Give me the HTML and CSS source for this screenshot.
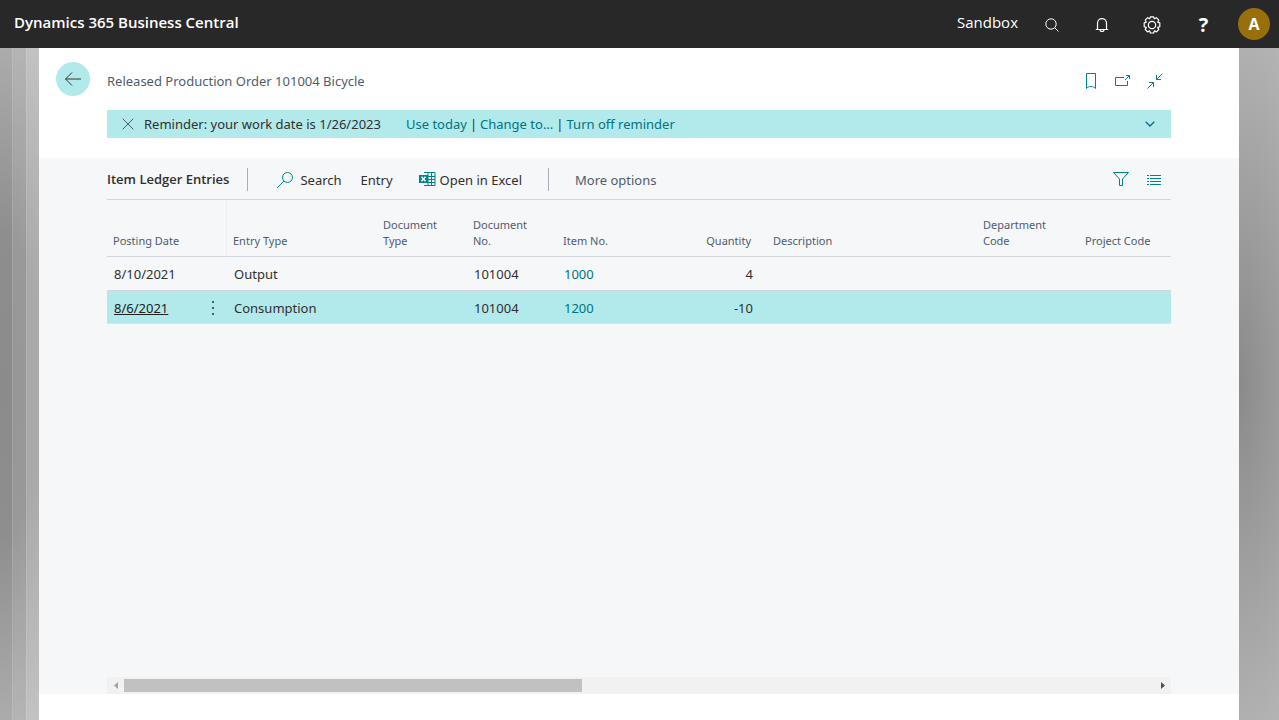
FILE: index.html
```html
<!DOCTYPE html>
<html lang="en">
<head>
<meta charset="utf-8">
<title>Item Ledger Entries - Dynamics 365 Business Central</title>
<link rel="stylesheet" href="styles.css">
</head>
<body>
<header class="topbar">
  <a class="brand" href="#">Dynamics 365 Business Central</a>
  <span class="environment">Sandbox</span>
  <nav class="top-actions">
    <button class="top-button" aria-label="Search"><svg width="16" height="16" viewBox="0 0 16 16"><circle cx="7" cy="7" r="5.2"/><path d="M11 11l3.5 3.5"/></svg></button>
    <button class="top-button" aria-label="Notifications"><svg width="16" height="16" viewBox="0 0 16 16"><path d="M1.800 12.500h12.400M3.500 12.500V6.200a4.500 4.500 0 0 1 9 0v6.300M6 12.500a2 2 0 0 0 4 0" stroke-width="1.200"/></svg></button>
    <button class="top-button" aria-label="Settings"><svg width="20" height="20" viewBox="0 0 20 20"><path d="M8.300 1.800h3.400l.6 2 2.100-1.100 2.400 2.400-1.100 2.100 2.100.7v3.800l-2.100.7 1.100 2.100-2.400 2.400-2.100-1.100-.6 2.200H8.300l-.6-2.200-2.100 1.100-2.400-2.400 1.100-2.100-2.100-.7V7.900l2.100-.7-1.100-2.100 2.400-2.400 2.100 1.100z" stroke-width="1.200" stroke-linejoin="round"/><circle cx="10" cy="10" r="3.700" stroke-width="1.200"/></svg></button>
    <button class="top-button help" aria-label="Help">?</button>
    <button class="avatar" aria-label="Account">A</button>
  </nav>
</header>
<div class="stage">
  <div class="layers"><i></i><i></i><i></i></div>
  <main class="page">
    <div class="page-head">
      <button class="back" aria-label="Back"><svg width="18" height="18" viewBox="0 0 18 18"><path d="M17 9H1.500M8 2.500L1.500 9 8 15.500"/></svg></button>
      <h1 class="caption">Released Production Order 101004 Bicycle</h1>
      <div class="head-actions">
        <button class="icon-button" aria-label="Bookmark"><svg width="16" height="18" viewBox="0 0 16 18"><path d="M3.500 1.500h9v15c-1.500-2.600-7.500-2.600-9 0z"/></svg></button>
        <button class="icon-button" aria-label="Open in new window"><svg width="16" height="18" viewBox="0 0 16 18"><path d="M9 5.500H.500v8h12V9M10 8l4.500-4.500M11 3.500h3.500V7"/></svg></button>
        <button class="icon-button" aria-label="Collapse"><svg width="16" height="18" viewBox="0 0 16 18"><path d="M.5 16.500l6-6M2 10.500h4.500V15M15.500 1.500l-6 6M9.500 3v4.500H14"/></svg></button>
      </div>
    </div>
    <div class="notice">
      <button class="notice-close" aria-label="Dismiss"><svg width="12" height="12" viewBox="0 0 12 12"><path d="M.700.700l10.600 10.600M11.300.700L.700 11.300"/></svg></button>
      <span class="notice-text">Reminder: your work date is 1/26/2023</span>
      <a href="#">Use today</a><span class="bar">|</span><a href="#">Change to...</a><span class="bar">|</span><a href="#">Turn off reminder</a>
      <button class="notice-more" aria-label="Show more"><svg width="10" height="6" viewBox="0 0 10 6"><path d="M.700.700L5 5 9.300.700" stroke-width="1.300"/></svg></button>
    </div>
    <section class="list">
      <div class="toolbar">
        <h2 class="list-title">Item Ledger Entries</h2>
        <button class="tool search"><svg width="18" height="18" viewBox="0 0 18 18"><circle cx="11.500" cy="6.500" r="5"/><path d="M8 10L1 17"/></svg>Search</button>
        <button class="tool">Entry</button>
        <button class="tool excel"><svg width="17" height="16" viewBox="0 0 17 16"><path class="excel-grid" d="M5 .500h11v13H5M9 .500v13M5 4.500h11M5 7.500h11M5 10.500h11M12.500 .500v13"/><path class="excel-tile" d="M0 3h9v8H0z"/><path class="excel-x" d="M2.500 4.700l4 4.600M6.500 4.700l-4 4.600"/></svg>Open in Excel</button>
        <button class="tool more">More options</button>
        <div class="view-actions">
          <button class="icon-button" aria-label="Filter"><svg width="18" height="18" viewBox="0 0 18 18"><path d="M1.500 1.500h15L10.500 8v6.500h-3V8z"/></svg></button>
          <button class="icon-button" aria-label="View layout"><svg width="16" height="18" viewBox="0 0 16 18"><path d="M1 4.500h2M4 4.500h11M1 7.500h2M4 7.500h11M1 10.500h2M4 10.500h11M1 13.500h2M4 13.500h11"/></svg></button>
        </div>
      </div>
      <table class="entries">
        <colgroup><col class="w-date"><col class="w-menu"><col class="w-type"><col class="w-doc"><col class="w-doc"><col class="w-item"><col class="w-qty"><col class="w-desc"><col class="w-dept"><col></colgroup>
        <thead><tr><th>Posting Date</th><th class="split"></th><th>Entry Type</th><th>Document<br>Type</th><th>Document<br>No.</th><th>Item No.</th><th class="num">Quantity</th><th>Description</th><th>Department<br>Code</th><th>Project Code</th></tr></thead>
        <tbody>
          <tr><td>8/10/2021</td><td></td><td>Output</td><td></td><td>101004</td><td><a href="#">1000</a></td><td class="num">4</td><td></td><td></td><td></td></tr>
          <tr class="selected"><td><a class="date-link" href="#">8/6/2021</a></td><td class="menu-cell"><button class="row-menu" aria-label="Row actions"><svg width="4" height="16" viewBox="0 0 4 16"><path d="M1 1h2v2H1zM1 7h2v2H1zM1 13h2v2H1z"/></svg></button></td><td>Consumption</td><td></td><td>101004</td><td><a href="#">1200</a></td><td class="num">-10</td><td></td><td></td><td></td></tr>
        </tbody>
      </table>
      <div class="scrollbar">
        <button class="scroll-arrow left" aria-label="Scroll left"><svg width="4" height="7" viewBox="0 0 4 7"><path d="M4 0v7L0 3.500z"/></svg></button>
        <div class="track"><div class="thumb"></div></div>
        <button class="scroll-arrow" aria-label="Scroll right"><svg width="4" height="7" viewBox="0 0 4 7"><path d="M0 0v7l4-3.500z"/></svg></button>
      </div>
    </section>
  </main>
  <div class="backdrop"></div>
</div>
</body>
</html>
```

FILE: styles.css
```css
* { box-sizing: border-box; }
body {
  margin: 0;
  min-height: 100vh;
  display: flex;
  flex-direction: column;
  font: 13px/20px "Noto Sans", "Open Sans", sans-serif;
  color: #303030;
}
h1, h2 { margin: 0; font-size: inherit; }
a { color: #00747f; text-decoration: none; }
button {
  margin: 0; padding: 0; border: 0; background: none;
  font: inherit; color: inherit;
  display: flex; align-items: center; justify-content: center;
}
svg { display: block; fill: none; stroke: currentColor; }

.topbar {
  display: flex; align-items: center;
  height: 48px; padding: 0 9px 0 14px;
  background: #282828; color: #fff;
  font-family: "Open Sans", "Noto Sans", sans-serif;
}
.brand { color: #fff; font-size: 15px; font-weight: 600; padding-bottom: 4px; }
.environment { margin-left: auto; font-size: 15px; padding-bottom: 4px; }
.top-actions { display: flex; align-items: center; margin-left: 8px; }
.top-button { width: 50px; height: 48px; padding: 2px 0 0 1px; }
.help { font-size: 20px; font-weight: 700; width: 54px; }
.avatar { width: 32px; height: 32px; margin-left: 8px; border-radius: 50%; background: #986f0b; font-size: 16px; font-weight: 700; }

.stage { flex: 1; display: flex; }
.layers, .backdrop { flex: none; display: flex; }
.layers { width: 39px; background: radial-gradient(300% 56% at 0% 50%, #8b8b8b, #8e8e8e 40%, #b2b2b2); }
.layers i { flex: 1; }
.layers i:nth-child(2) { background: rgba(255, 255, 255, .1); border-left: 1px solid rgba(255, 255, 255, .1); }
.layers i:nth-child(3) { background: rgba(255, 255, 255, .25); border-left: 1px solid rgba(255, 255, 255, .1); }
.backdrop { width: 40px; background: radial-gradient(260% 60% at 0% 50%, #8a8a8a, #b8b8b8); }
.page { flex: 1; min-width: 0; display: flex; flex-direction: column; padding-bottom: 26px; background: #fff; }

.page-head { display: flex; align-items: center; height: 62px; padding: 0 76px 0 17px; }
.back { width: 34px; height: 34px; border-radius: 50%; background: #b2e9eb; color: #333; }
.caption { margin-left: 17px; padding-top: 4px; font-weight: 400; color: #505c6d; }
.head-actions { display: flex; gap: 16px; margin-left: auto; padding-top: 4px; }
.icon-button { color: #00838a; }

.notice { display: flex; align-items: center; height: 28px; margin: 0 68px 20px; padding: 0 16px 0 15px; background: #b2e9eb; }
.notice-close { color: #505c6d; }
.notice-text { margin: 0 25px 0 10px; }
.bar { margin: 0 3px; }
.notice-more { margin-left: auto; color: #00747f; }

.list { flex: 1; display: flex; flex-direction: column; padding: 0 68px; background: #f5f7f9; }
.toolbar { display: flex; align-items: center; height: 42px; padding: 2px 9px 0 0; border-bottom: 1px solid #d2d6da; }
.list-title { padding-right: 18px; border-right: 1px solid #a6adb8; font-family: "Open Sans", "Noto Sans", sans-serif; font-weight: 600; line-height: 23px; }
.tool { height: 23px; }
.search { margin: 0 19px 0 28px; gap: 6px; }
.excel { margin: 0 26px; gap: 4px; }
.tool svg { color: #00838a; }
.excel-grid { stroke: #00838a; }
.excel-tile { fill: #00838a; stroke: none; }
.excel-x { stroke: #fff; stroke-width: 1.4; }
.more { padding-left: 26px; border-left: 1px solid #a6adb8; color: #505c6d; }
.view-actions { display: flex; gap: 16px; margin-left: auto; }

.entries { width: 100%; table-layout: fixed; border-collapse: separate; border-spacing: 0; }
.w-date { width: 93px; }
.w-menu { width: 27px; }
.w-type { width: 150px; }
.w-doc, .w-item { width: 90px; }
.w-qty { width: 120px; }
.w-desc { width: 210px; }
.w-dept { width: 102px; }
th { height: 57px; padding: 0 6px 7px; vertical-align: bottom; text-align: left; font-size: 11px; line-height: 16px; font-weight: 400; color: #505c6d; border-bottom: 1px solid #d2d6da; }
td { height: 34px; padding: 0 7px; border-bottom: 1px solid #d2d6da; }
.split { border-right: 1px solid #eceef1; }
.num { text-align: right; }
th.num { padding-right: 16px; }
td.num { padding-right: 14px; }
.selected { background: #b2e9eb; }
.selected td { height: 33px; padding-top: 2px; border-bottom-color: #dce3e7; }
.date-link { color: #212121; text-decoration: underline; }
.selected .menu-cell { padding: 2px 0 0; }
.row-menu { width: 25px; height: 24px; }
.row-menu svg { fill: #505c6d; stroke: none; }

.scrollbar { display: flex; height: 17px; margin-top: auto; background: #f1f1f1; }
.scroll-arrow { width: 17px; color: #505050; }
.scroll-arrow svg { fill: currentColor; stroke: none; }
.left { color: #a3a3a3; }
.track { flex: 1; padding: 2px 0; }
.thumb { width: 44.5%; height: 13px; background: #c1c1c1; }
```
